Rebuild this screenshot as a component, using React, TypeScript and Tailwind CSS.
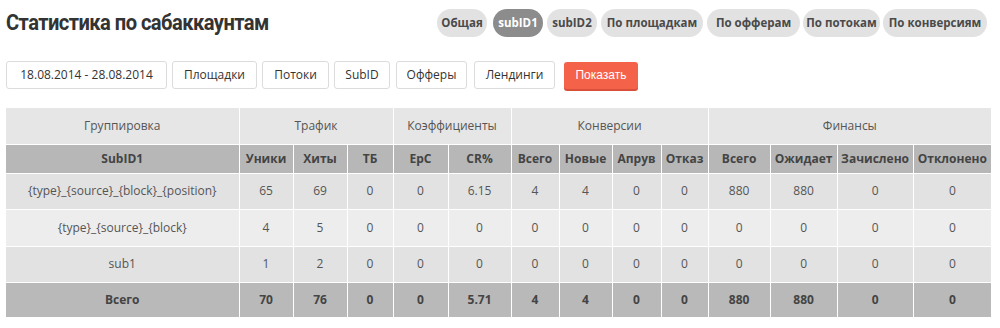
import React from "react";

const tabs = [
	{ t: "Общая", w: "w-[50px]", m: "" },
	{ t: "subID1", w: "w-[50px]", m: "ml-[6px]" },
	{ t: "subID2", w: "w-[50px]", m: "ml-[4px]" },
	{ t: "По площадкам", w: "w-[102px]", m: "ml-[4px]" },
	{ t: "По офферам", w: "w-[93px]", m: "ml-[4px]" },
	{ t: "По потокам", w: "w-[77px]", m: "ml-[3px]" },
	{ t: "По конверсиям", w: "w-[104px]", m: "ml-[3px]" },
];

const filters = [
	{ t: "18.08.2014 - 28.08.2014", w: "w-[161px]", m: "" },
	{ t: "Площадки", w: "w-[85px]", m: "ml-[5px]" },
	{ t: "Потоки", w: "w-[67px]", m: "ml-[5px]" },
	{ t: "SubID", w: "w-[56px]", m: "ml-[5px]" },
	{ t: "Офферы", w: "w-[71px]", m: "ml-[6px]" },
	{ t: "Лендинги", w: "w-[81px]", m: "ml-[7px]" },
];

const widths = [233, 54, 54, 46, 55, 63, 48, 53, 49, 47, 62, 67, 76, 78];

const subHeads = [
	"SubID1",
	"Уники",
	"Хиты",
	"ТБ",
	"EpC",
	"CR%",
	"Всего",
	"Новые",
	"Апрув",
	"Отказ",
	"Всего",
	"Ожидает",
	"Зачислено",
	"Отклонено",
];

const rows = [
	["{type}_{source}_{block}_{position}", "65", "69", "0", "0", "6.15", "4", "4", "0", "0", "880", "880", "0", "0"],
	["{type}_{source}_{block}", "4", "5", "0", "0", "0", "0", "0", "0", "0", "0", "0", "0", "0"],
	["sub1", "1", "2", "0", "0", "0", "0", "0", "0", "0", "0", "0", "0", "0"],
];

const total = ["Всего", "70", "76", "0", "0", "5.71", "4", "4", "0", "0", "880", "880", "0", "0"];

export default function App() {
	return (
		<div className="w-[1000px] h-[328px] bg-white font-['Open_Sans',sans-serif] text-[#555] overflow-hidden">
			<div className="flex items-center justify-between h-[44px] pl-[6px] pr-[13px] pt-[1px]">
				<h1 className="font-['Roboto',sans-serif] font-bold text-[22px] text-[#333] tracking-[-0.6px] origin-left scale-x-[0.915] whitespace-nowrap">
					Статистика по сабаккаунтам
				</h1>
				<div className="flex">
					{tabs.map((t) => (
						<span
							key={t.t}
							className={
								t.t === "subID1"
									? `${t.w} ${t.m} h-[28px] flex items-center justify-center rounded-full bg-[#8c8c8c] text-white text-[11.5px] font-bold whitespace-nowrap`
									: `${t.w} ${t.m} h-[28px] flex items-center justify-center rounded-full bg-[#e2e2e2] text-[#4a4a4a] text-[11.5px] font-bold whitespace-nowrap`
							}>
							{t.t}
						</span>
					))}
				</div>
			</div>

			<div className="flex items-center pl-[6px] mt-[17px]">
				{filters.map((f) => (
					<button
						key={f.t}
						className={`${f.w} ${f.m} h-[28px] border border-[#dcdcdc] rounded-[3px] bg-white text-[12px] text-[#333] whitespace-nowrap`}>
						{f.t}
					</button>
				))}
				<button className="ml-[9px] w-[74px] h-[27px] rounded-[3px] bg-[#f5624a] shadow-[0_2px_0_#d9503a] text-[12px] text-white font-['Liberation_Sans',sans-serif]">
					Показать
				</button>
			</div>

			<table className="ml-[6px] mt-[19px] w-[984px] table-fixed border-collapse text-[12px] text-center">
				<colgroup>
					{widths.map((w, i) => (
						<col key={i} style={{ width: w }} />
					))}
				</colgroup>
				<thead>
					<tr className="h-[36px] bg-[#e6e6e6] text-[#555]">
						<th className="font-normal border border-white border-t-0 border-l-0">Группировка</th>
						<th colSpan={3} className="font-normal border border-white border-t-0">Трафик</th>
						<th colSpan={2} className="font-normal border border-white border-t-0">Коэффициенты</th>
						<th colSpan={4} className="font-normal border border-white border-t-0">Конверсии</th>
						<th colSpan={4} className="font-normal border border-white border-t-0 border-r-0">Финансы</th>
					</tr>
					<tr className="h-[29px] bg-[#b7b7b7] text-[#444]">
						{subHeads.map((h, i) => (
							<th key={i} className="font-bold border border-white first:border-l-0 last:border-r-0">
								{h}
							</th>
						))}
					</tr>
				</thead>
				<tbody>
					{rows.map((r, ri) => (
						<tr key={ri} className={ri === 1 ? "h-[37px] bg-[#ededed]" : "h-[36px] bg-[#e2e2e2]"}>
							{r.map((c, ci) => (
								<td key={ci} className="border border-white first:border-l-0 last:border-r-0">
									{c}
								</td>
							))}
						</tr>
					))}
					<tr className="h-[35px] bg-[#b9b9b9] text-[#444] font-bold">
						{total.map((c, ci) => (
							<td key={ci} className="border border-white border-b-0 first:border-l-0 last:border-r-0">
								{c}
							</td>
						))}
					</tr>
				</tbody>
			</table>
		</div>
	);
}
